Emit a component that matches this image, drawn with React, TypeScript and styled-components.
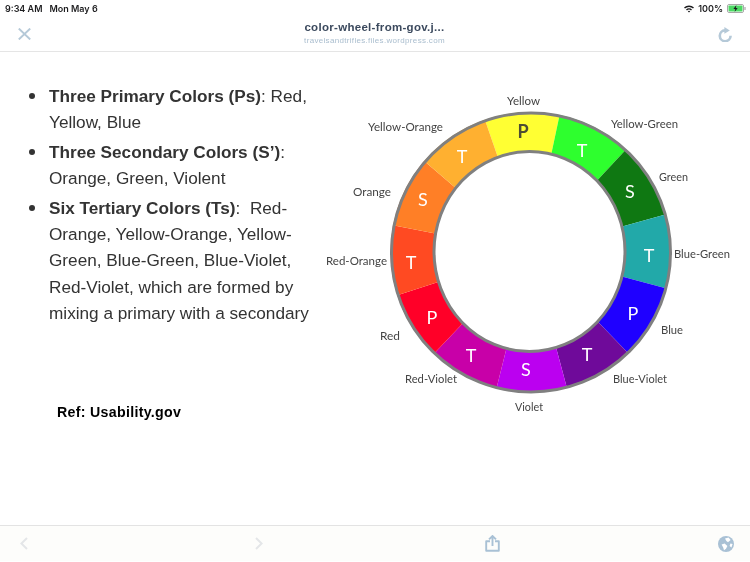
import React from 'react';
import styled, { createGlobalStyle } from 'styled-components';

const GlobalStyle = createGlobalStyle`
    html, body { margin: 0; padding: 0; background: #fff; }
    body { font-family: "Liberation Sans", Arial, sans-serif; }
`;

const Page = styled.div`
    width: 750px;
    height: 562px;
    display: flex;
    flex-direction: column;
    overflow: hidden;
    background: #fff;
`;

const StatusBar = styled.div`
    height: 17px;
    padding: 0 4px 0 5px;
    display: flex;
    align-items: center;
    justify-content: space-between;
    font-family: Inter, sans-serif;
    font-size: 9px;
    font-weight: 600;
    color: #1c1c1e;
    filter: blur(0.2px);
`;

const StatusGroup = styled.div<{ $gap: number }>`
    display: flex;
    align-items: center;
    gap: ${(p) => p.$gap}px;
`;

const Header = styled.header`
    height: 34px;
    padding: 0 18px;
    display: flex;
    align-items: center;
    justify-content: space-between;
    border-bottom: 1px solid #e5e5e5;
    color: #b5c9d8;
`;

const TitleBlock = styled.div`
    display: flex;
    flex-direction: column;
    align-items: center;
    gap: 2px;
    padding-bottom: 3px;
    filter: blur(0.2px);
`;

const Title = styled.div`
    font-size: 11.5px;
    font-weight: 700;
    letter-spacing: 0.3px;
    line-height: 13px;
    color: #3c4a5e;
`;

const Subtitle = styled.div`
    font-size: 8px;
    letter-spacing: 0.32px;
    line-height: 9px;
    color: #a9bdce;
`;

const Main = styled.main`
    flex: 1;
    display: flex;
    min-height: 0;
`;

const TextColumn = styled.div`
    width: 320px;
    flex: none;
    padding-top: 31px;
    box-sizing: border-box;
    filter: blur(0.25px);
`;

const Bullets = styled.ul`
    margin: 0;
    padding: 0 0 0 49px;
    width: 267px;
    list-style: none;
`;

const Bullet = styled.li`
    font-size: 17.2px;
    line-height: 26.4px;
    color: #333;
    margin-bottom: 3px;
    strong { font-weight: 700; }
    &::before {
        content: '';
        display: inline-block;
        width: 6px;
        height: 6px;
        margin: 0 14px 3px -20px;
        border-radius: 50%;
        background: #333;
        vertical-align: middle;
    }
`;

const Reference = styled.div`
    margin: 76px 0 0 57px;
    font-size: 14.2px;
    font-weight: 700;
    line-height: 18px;
    letter-spacing: 0.3px;
    color: #000;
`;

const WheelFigure = styled.svg`
    flex: none;
    margin-top: 33px;
    width: 430px;
    height: 335px;
    filter: blur(0.35px);
`;

const WheelLabel = styled.text`
    font-family: Lato, sans-serif;
    font-size: 10.5px;
    fill: #444;
`;

const WheelLetter = styled.text<{ $dark?: boolean }>`
    font-family: Lato, sans-serif;
    font-size: 18px;
    font-weight: ${(p) => (p.$dark ? 700 : 400)};
    fill: ${(p) => (p.$dark ? '#4d4d33' : '#fff')};
    text-anchor: middle;
    dominant-baseline: central;
`;

const Footer = styled.footer`
    height: 35px;
    margin-bottom: 1px;
    padding: 0 16px 0 20px;
    display: grid;
    grid-template-columns: 235px 230px 1fr auto;
    align-items: center;
    border-top: 1px solid #e3e3e3;
    background: #fdfdfb;
    color: #a9c1d5;
`;

const DisabledArrow = styled.svg`
    display: block;
    color: #e4e6e8;
`;

type Slice = { color: string; end: number; letter: string; x: number; y: number; dark?: boolean };

// end = angle of the slice's clockwise edge, degrees from 12 o'clock
const slices: Slice[] = [
    { color: '#ffff33', end: 12, letter: 'P', x: 523, y: 131, dark: true },
    { color: '#2eff2e', end: 43, letter: 'T', x: 582, y: 150 },
    { color: '#0f7812', end: 74.5, letter: 'S', x: 630, y: 191 },
    { color: '#22a9a9', end: 105, letter: 'T', x: 649, y: 255 },
    { color: '#1f00ff', end: 136, letter: 'P', x: 633, y: 313 },
    { color: '#6f0a9a', end: 165, letter: 'T', x: 587, y: 354 },
    { color: '#bb00f0', end: 194, letter: 'S', x: 526, y: 369 },
    { color: '#c800a8', end: 223.5, letter: 'T', x: 471, y: 355 },
    { color: '#ff0028', end: 252, letter: 'P', x: 432, y: 317 },
    { color: '#ff4a22', end: 281, letter: 'T', x: 411, y: 262 },
    { color: '#ff7f26', end: 310.6, letter: 'S', x: 423, y: 199 },
    { color: '#ffb030', end: 341, letter: 'T', x: 462, y: 156 },
];

const labels = [
    { text: 'Yellow', x: 507, y: 101, w: 33 },
    { text: 'Yellow-Green', x: 611, y: 124, w: 67 },
    { text: 'Green', x: 659, y: 177, w: 29 },
    { text: 'Blue-Green', x: 674, y: 254, w: 56 },
    { text: 'Blue', x: 661, y: 330, w: 22 },
    { text: 'Blue-Violet', x: 613, y: 379, w: 54 },
    { text: 'Violet', x: 515, y: 407, w: 28 },
    { text: 'Red-Violet', x: 405, y: 379, w: 52 },
    { text: 'Red', x: 380, y: 336, w: 20 },
    { text: 'Red-Orange', x: 326, y: 261, w: 61 },
    { text: 'Orange', x: 353, y: 192, w: 38 },
    { text: 'Yellow-Orange', x: 368, y: 127, w: 75 },
];

const CX = 530.5;
const CY = 252;
const R = 140;

const pointAt = (deg: number) => {
    const a = (deg * Math.PI) / 180;
    return `${(CX + R * Math.sin(a)).toFixed(2)} ${(CY - R * Math.cos(a)).toFixed(2)}`;
};

const sectorPath = (from: number, to: number) =>
    `M${CX} ${CY} L${pointAt(from)} A${R} ${R} 0 0 1 ${pointAt(to)} Z`;

const ColorWheel = () => (
    <WheelFigure viewBox="320 85 430 335">
        {slices.map((s, i) => {
            const prev = slices[(i + slices.length - 1) % slices.length].end;
            return <path key={i} d={sectorPath(prev, prev > s.end ? s.end + 360 : s.end)} fill={s.color} />;
        })}
        <circle cx={531} cy={252.5} r={139.5} fill="none" stroke="#808080" strokeWidth={3} />
        <ellipse cx={529.5} cy={251.5} rx={95.5} ry={100} fill="#fff" stroke="#808080" strokeWidth={3} />
        {slices.map((s, i) => (
            <WheelLetter key={i} x={s.x} y={s.y} $dark={s.dark}>
                {s.letter}
            </WheelLetter>
        ))}
        {labels.map((l) => (
            <WheelLabel key={l.text} x={l.x} y={l.y + 3.5} textLength={l.w} lengthAdjust="spacingAndGlyphs">
                {l.text}
            </WheelLabel>
        ))}
    </WheelFigure>
);

const WifiIcon = () => (
    <svg width="10" height="8" viewBox="0 0 10 8">
        <path d="M0 2.6A7 7 0 0 1 10 2.6L9 3.6A5.6 5.6 0 0 0 1 3.6Z" fill="#1c1c1e" />
        <path d="M2 4.5A4.2 4.2 0 0 1 8 4.5L7 5.5A2.8 2.8 0 0 0 3 5.5Z" fill="#1c1c1e" />
        <path d="M3.8 6.2A1.8 1.8 0 0 1 6.2 6.2L5 7.6Z" fill="#1c1c1e" />
    </svg>
);

const BatteryIcon = () => (
    <svg width="19" height="9" viewBox="0 0 19 9">
        <rect x="0.5" y="0.5" width="16" height="8" rx="1.5" fill="#fff" stroke="#a8a8a8" />
        <rect x="1.5" y="1.5" width="14" height="6" rx="0.8" fill="#4cd964" />
        <rect x="17.4" y="3" width="1.2" height="3" rx="0.5" fill="#a8a8a8" />
        <path d="M9.4 1 6.4 5H8.3L7.6 8 10.7 4H8.8Z" fill="#1c1c1e" />
    </svg>
);

const CloseIcon = () => (
    <svg width="13" height="12" viewBox="0 0 13 12" fill="none" stroke="currentColor" strokeWidth="2">
        <path d="M0.8 0.6 12.2 11.4M12.2 0.6 0.8 11.4" />
    </svg>
);

const ReloadIcon = () => (
    <svg width="14" height="15" viewBox="0 0 14 15" fill="none" stroke="currentColor">
        <path d="M7 3.4A5.4 5.4 0 1 0 12.6 8.8" strokeWidth="2.6" />
        <path d="M6.4 0 11.8 3.4 6.4 6.8Z" fill="currentColor" stroke="none" />
    </svg>
);

const ShareIcon = () => (
    <svg width="15" height="17" viewBox="0 0 15 17" fill="none" stroke="currentColor" strokeWidth="1.9">
        <path d="M5 6.2H1.2V15.8H13.8V6.2H10" strokeLinejoin="round" />
        <path d="M7.5 11V1.4M4 4.4 7.5 1 11 4.4" />
    </svg>
);

const GlobeIcon = () => (
    <svg width="16" height="16" viewBox="0 0 16 16">
        <circle cx="8" cy="8" r="8" fill="currentColor" />
        <path d="M7 2.4 10.6 1.6 12.6 4 10 6.2 8.4 5Z" fill="#fff" />
        <path d="M3.6 8.6 6.6 7.6 9.4 10 8 12.8 6 14.2 5.2 11.4Z" fill="#fff" />
        <path d="M12.4 7.6 14.6 8 13.4 11.4 11.6 10Z" fill="#fff" />
    </svg>
);

const App: React.FC = () => (
    <Page>
        <GlobalStyle />
        <StatusBar>
            <StatusGroup $gap={7}>
                <span>9:34 AM</span>
                <span>Mon May 6</span>
            </StatusGroup>
            <StatusGroup $gap={4}>
                <WifiIcon />
                <span>100%</span>
                <BatteryIcon />
            </StatusGroup>
        </StatusBar>
        <Header>
            <CloseIcon />
            <TitleBlock>
                <Title>color-wheel-from-gov.j...</Title>
                <Subtitle>travelsandtrifles.files.wordpress.com</Subtitle>
            </TitleBlock>
            <ReloadIcon />
        </Header>
        <Main>
            <TextColumn>
                <Bullets>
                    <Bullet>
                        <strong>Three Primary Colors (Ps)</strong>: Red, Yellow, Blue
                    </Bullet>
                    <Bullet>
                        <strong>Three Secondary Colors (S’)</strong>: Orange, Green, Violent
                    </Bullet>
                    <Bullet>
                        <strong>Six Tertiary Colors (Ts)</strong>:&nbsp; Red-Orange, Yellow-Orange, Yellow-Green,
                        Blue-Green, Blue-Violet, Red-Violet, which are formed by mixing a primary with a secondary
                    </Bullet>
                </Bullets>
                <Reference>Ref: Usability.gov</Reference>
            </TextColumn>
            <ColorWheel />
        </Main>
        <Footer>
            <DisabledArrow width="8" height="13" viewBox="0 0 8 13" fill="none" stroke="currentColor" strokeWidth="2">
                <path d="M7 1 1.4 6.5 7 12" />
            </DisabledArrow>
            <DisabledArrow width="8" height="13" viewBox="0 0 8 13" fill="none" stroke="currentColor" strokeWidth="2">
                <path d="M1 1 6.6 6.5 1 12" />
            </DisabledArrow>
            <ShareIcon />
            <GlobeIcon />
        </Footer>
    </Page>
);

export default App;
